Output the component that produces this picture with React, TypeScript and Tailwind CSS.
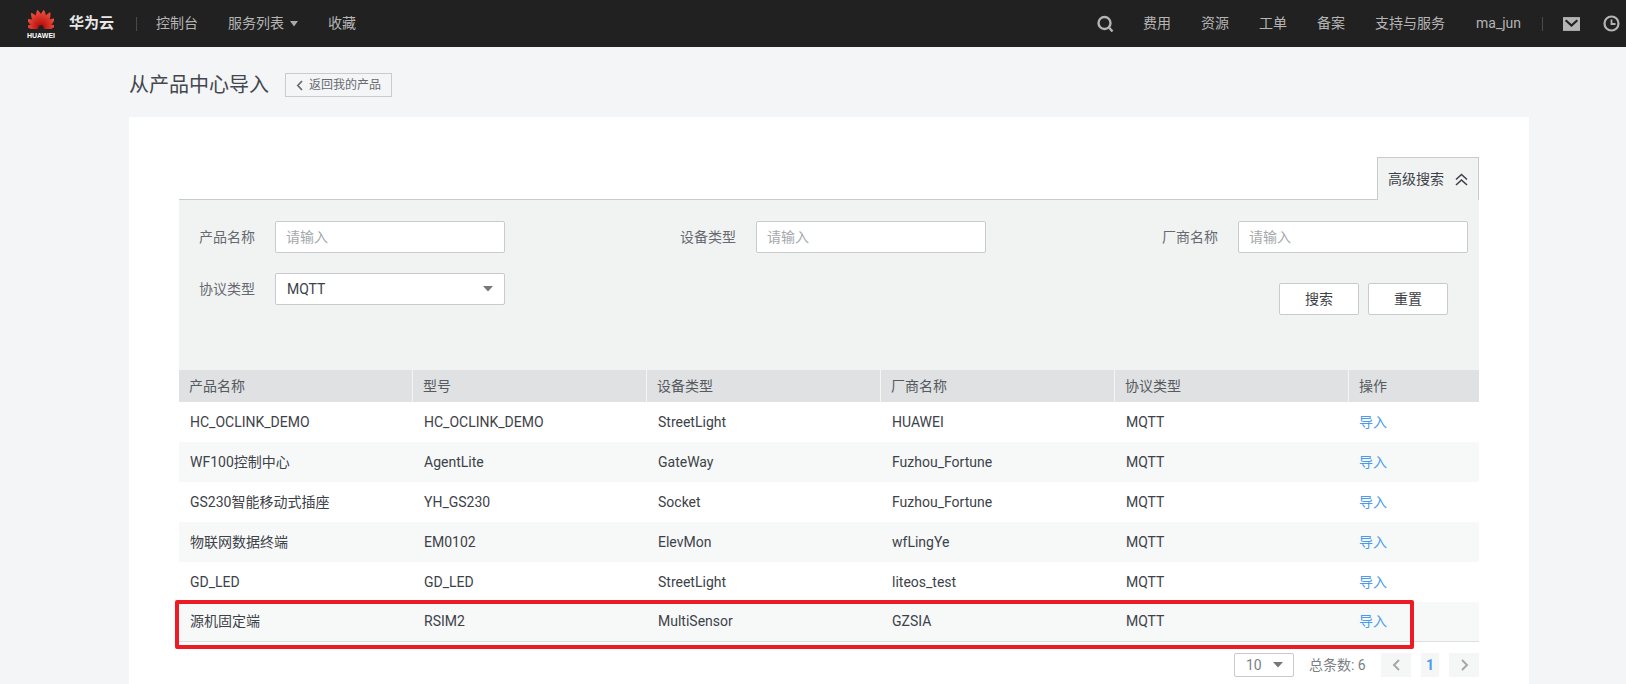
import React from "react";

const font = { fontFamily: 'Roboto, "Noto Sans CJK SC", sans-serif' };

function Logo() {
  const petals = [
    [-80, 0.78], [-55, 0.9], [-31, 0.98], [-10, 1], [10, 1], [31, 0.98], [55, 0.9], [80, 0.78],
  ];
  return (
    <div className="flex w-[26px] flex-col items-center">
      <svg width="26" height="20" viewBox="-13 -20 26 20">
        <defs>
          <linearGradient id="petal" x1="0" y1="0" x2="0" y2="1">
            <stop offset="0" stopColor="#f2543f" />
            <stop offset="1" stopColor="#b80f0e" />
          </linearGradient>
        </defs>
        {petals.map(([a, s]) => (
          <path key={a} d="M0 -3 C-4.6 -7 -4.2 -13 -0.4 -19 C3.9 -14 4.4 -7 0 -3 Z" fill="url(#petal)" transform={`translate(0 -0.5) rotate(${a}) scale(${s})`} />
        ))}
      </svg>
      <span className="mt-[3px] whitespace-nowrap text-[7px] font-bold leading-[7px] text-white" style={{ fontFamily: '"Liberation Sans", sans-serif' }}>HUAWEI</span>
    </div>
  );
}

function NavBar() {
  return (
    <header className="flex h-[47px] items-center justify-between bg-[#212121] text-[14px] text-[#b4b4b4]">
      <div className="flex items-center pl-[28px]">
        <Logo />
        <span className="ml-[15px] text-[15px] font-bold text-[#e8e8e8]">华为云</span>
        <span className="ml-[22px] h-[14px] w-px bg-[#4a4a4a]" />
        <span className="ml-[19px]">控制台</span>
        <span className="ml-[30px]">服务列表</span>
        <svg width="8" height="6" viewBox="0 0 8 6" className="ml-[6px] mt-[1px]"><path d="M0 0H8L4 5.5Z" fill="#a8a8a8" /></svg>
        <span className="ml-[30px]">收藏</span>
      </div>
      <div className="flex items-center">
        <svg width="18" height="18" viewBox="0 0 18 18" fill="none" stroke="#b4b4b4" className="mr-[29px] mt-[1px]">
          <circle cx="8.5" cy="8" r="6" strokeWidth="2.4" />
          <path d="M13 12.5L16.5 16.5" strokeWidth="2.4" />
        </svg>
        <span>费用</span>
        <span className="ml-[30px]">资源</span>
        <span className="ml-[30px]">工单</span>
        <span className="ml-[30px]">备案</span>
        <span className="ml-[30px]">支持与服务</span>
        <span className="ml-[31px]">ma_jun</span>
        <span className="ml-[21px] h-[14px] w-px bg-[#4a4a4a]" />
        <svg width="17" height="14" viewBox="0 0 16 13" className="ml-[20px]">
          <rect width="16" height="13" fill="#b4b4b4" />
          <path d="M2.5 3L8 8L13.5 3" fill="none" stroke="#212121" strokeWidth="2" />
        </svg>
        <svg width="17" height="17" viewBox="0 0 17 17" fill="none" stroke="#b4b4b4" strokeWidth="2.2" className="ml-[23px] mr-[6px]">
          <circle cx="8.5" cy="8.5" r="7" />
          <path d="M8.5 4.5V9H12.5" strokeWidth="1.8" />
        </svg>
      </div>
    </header>
  );
}

function TextField({ label, className = "" }: { label: string; className?: string }) {
  return (
    <div className={`flex items-center ${className}`}>
      <span className="w-[76px] text-[14px] text-[#666a70]">{label}</span>
      <div className="flex h-[32px] w-[230px] items-center rounded-[2px] border border-[#c8cacc] bg-white pl-[10px] text-[14px] text-[#a5a8ab]">请输入</div>
    </div>
  );
}

const rows = [
  ["HC_OCLINK_DEMO", "HC_OCLINK_DEMO", "StreetLight", "HUAWEI"],
  ["WF100控制中心", "AgentLite", "GateWay", "Fuzhou_Fortune"],
  ["GS230智能移动式插座", "YH_GS230", "Socket", "Fuzhou_Fortune"],
  ["物联网数据终端", "EM0102", "ElevMon", "wfLingYe"],
  ["GD_LED", "GD_LED", "StreetLight", "liteos_test"],
  ["源机固定端", "RSIM2", "MultiSensor", "GZSIA"],
];

const heads = ["产品名称", "型号", "设备类型", "厂商名称", "协议类型", "操作"];

function Table() {
  return (
    <div className="relative">
      <div className="grid h-[32px] grid-cols-[234px_234px_234px_234px_234px_1fr] bg-[#dfe1e2] text-[14px] text-[#555a60]">
        {heads.map((h, i) => (
          <div key={h} className={`flex items-center pl-[10px] ${i < 5 ? "border-r border-[#f4f5f5]" : ""}`}>{h}</div>
        ))}
      </div>
      {rows.map((r, i) => (
        <div key={r[0]} className={`grid h-[40px] grid-cols-[234px_234px_234px_234px_234px_1fr] text-[14px] text-[#3d4248] ${i % 2 === 1 ? "bg-[#f7f8f8]" : "bg-white"} ${i === 5 ? "border-b border-[#dcdedf]" : ""}`}>
          {[...r, "MQTT"].map((c, j) => (
            <div key={j} className="flex items-center pl-[11px]">{c}</div>
          ))}
          <div className="flex items-center pl-[10px] text-[#4a9bf0]">导入</div>
        </div>
      ))}
      <div className="absolute left-[-4px] top-[230px] h-[49px] w-[1239px] rounded-[2px] border-[4px] border-[#ed1c24]" />
    </div>
  );
}

function Pagination() {
  return (
    <div className="mt-[11px] flex h-[24px] items-center justify-end text-[14px] text-[#7b7f84]">
      <div className="flex h-[24px] w-[60px] items-center justify-between rounded-[2px] border border-[#c8cacc] bg-white pl-[11px] pr-[10px] text-[14px]">
        <span>10</span>
        <svg width="10" height="6" viewBox="0 0 10 6"><path d="M0 0H10L5 5.5Z" fill="#777" /></svg>
      </div>
      <span className="ml-[15px] w-[57px] whitespace-nowrap">总条数: 6</span>
      <div className="ml-[15px] flex h-[24px] w-[30px] items-center justify-center bg-[#f5f6f6]">
        <svg width="9" height="12" viewBox="0 0 9 12" fill="none" stroke="#a5a8ab" strokeWidth="2"><path d="M7 1L2 6L7 11" /></svg>
      </div>
      <div className="ml-[10px] flex h-[24px] w-[18px] items-center justify-center bg-[#f5f6f6] font-bold text-[#4a9bf0]">1</div>
      <div className="ml-[10px] flex h-[24px] w-[30px] items-center justify-center bg-[#f5f6f6]">
        <svg width="9" height="12" viewBox="0 0 9 12" fill="none" stroke="#a5a8ab" strokeWidth="2"><path d="M2 1L7 6L2 11" /></svg>
      </div>
    </div>
  );
}

export default function App() {
  return (
    <div className="h-[684px] overflow-hidden bg-[#f4f5f7]" style={font}>
      <NavBar />
      <div className="pl-[129px] pr-[97px]">
        <div className="flex h-[70px] items-center pt-[6px]">
          <h1 className="text-[20px] font-normal leading-[28px] text-[#43474d]">从产品中心导入</h1>
          <div className="ml-[16px] flex h-[24px] items-center border border-[#c9cbce] pl-[10px] pr-[10px] text-[12px] text-[#666a70]">
            <svg width="8" height="11" viewBox="0 0 8 11" fill="none" stroke="#666a70" strokeWidth="1.7" className="mr-[5px]"><path d="M6 1L1.8 5.5L6 10" /></svg>
            返回我的产品
          </div>
        </div>
        <main className="h-[600px] bg-white px-[50px] pt-[40px]">
          <div className="flex justify-end border-b border-[#c8cacc]">
            <div className="-mb-px flex h-[43px] w-[102px] items-center gap-[11px] border-x border-t border-[#c8cacc] border-b-[#f1f3f3] bg-[#f1f3f3] pl-[10px] text-[14px] text-[#3d4248]">
              高级搜索
              <svg width="13" height="13" viewBox="0 0 13 13" fill="none" stroke="#3d4248" strokeWidth="1.6"><path d="M1 6.5L6.5 1.5L12 6.5M1 12L6.5 7L12 12" /></svg>
            </div>
          </div>
          <section className="h-[170px] bg-[#f1f3f3] pl-[20px] pr-[11px] pt-[21px]">
            <div className="flex justify-between">
              <TextField label="产品名称" />
              <TextField label="设备类型" className="ml-[-1px]" />
              <TextField label="厂商名称" />
            </div>
            <div className="mt-[20px] flex items-start justify-between">
              <div className="flex items-center">
                <span className="w-[76px] text-[14px] text-[#666a70]">协议类型</span>
                <div className="flex h-[32px] w-[230px] items-center justify-between rounded-[2px] border border-[#c8cacc] bg-white pl-[11px] pr-[11px] text-[14px] text-[#3d4248]">
                  MQTT
                  <svg width="10" height="6" viewBox="0 0 10 6"><path d="M0 0H10L5 5.5Z" fill="#777" /></svg>
                </div>
              </div>
              <div className="mr-[20px] mt-[10px] flex gap-[9px]">
                <div className="flex h-[32px] w-[80px] items-center justify-center rounded-[2px] border border-[#c8cacc] bg-white text-[14px] text-[#3d4248]">搜索</div>
                <div className="flex h-[32px] w-[80px] items-center justify-center rounded-[2px] border border-[#c8cacc] bg-white text-[14px] text-[#3d4248]">重置</div>
              </div>
            </div>
          </section>
          <Table />
          <Pagination />
        </main>
      </div>
    </div>
  );
}
